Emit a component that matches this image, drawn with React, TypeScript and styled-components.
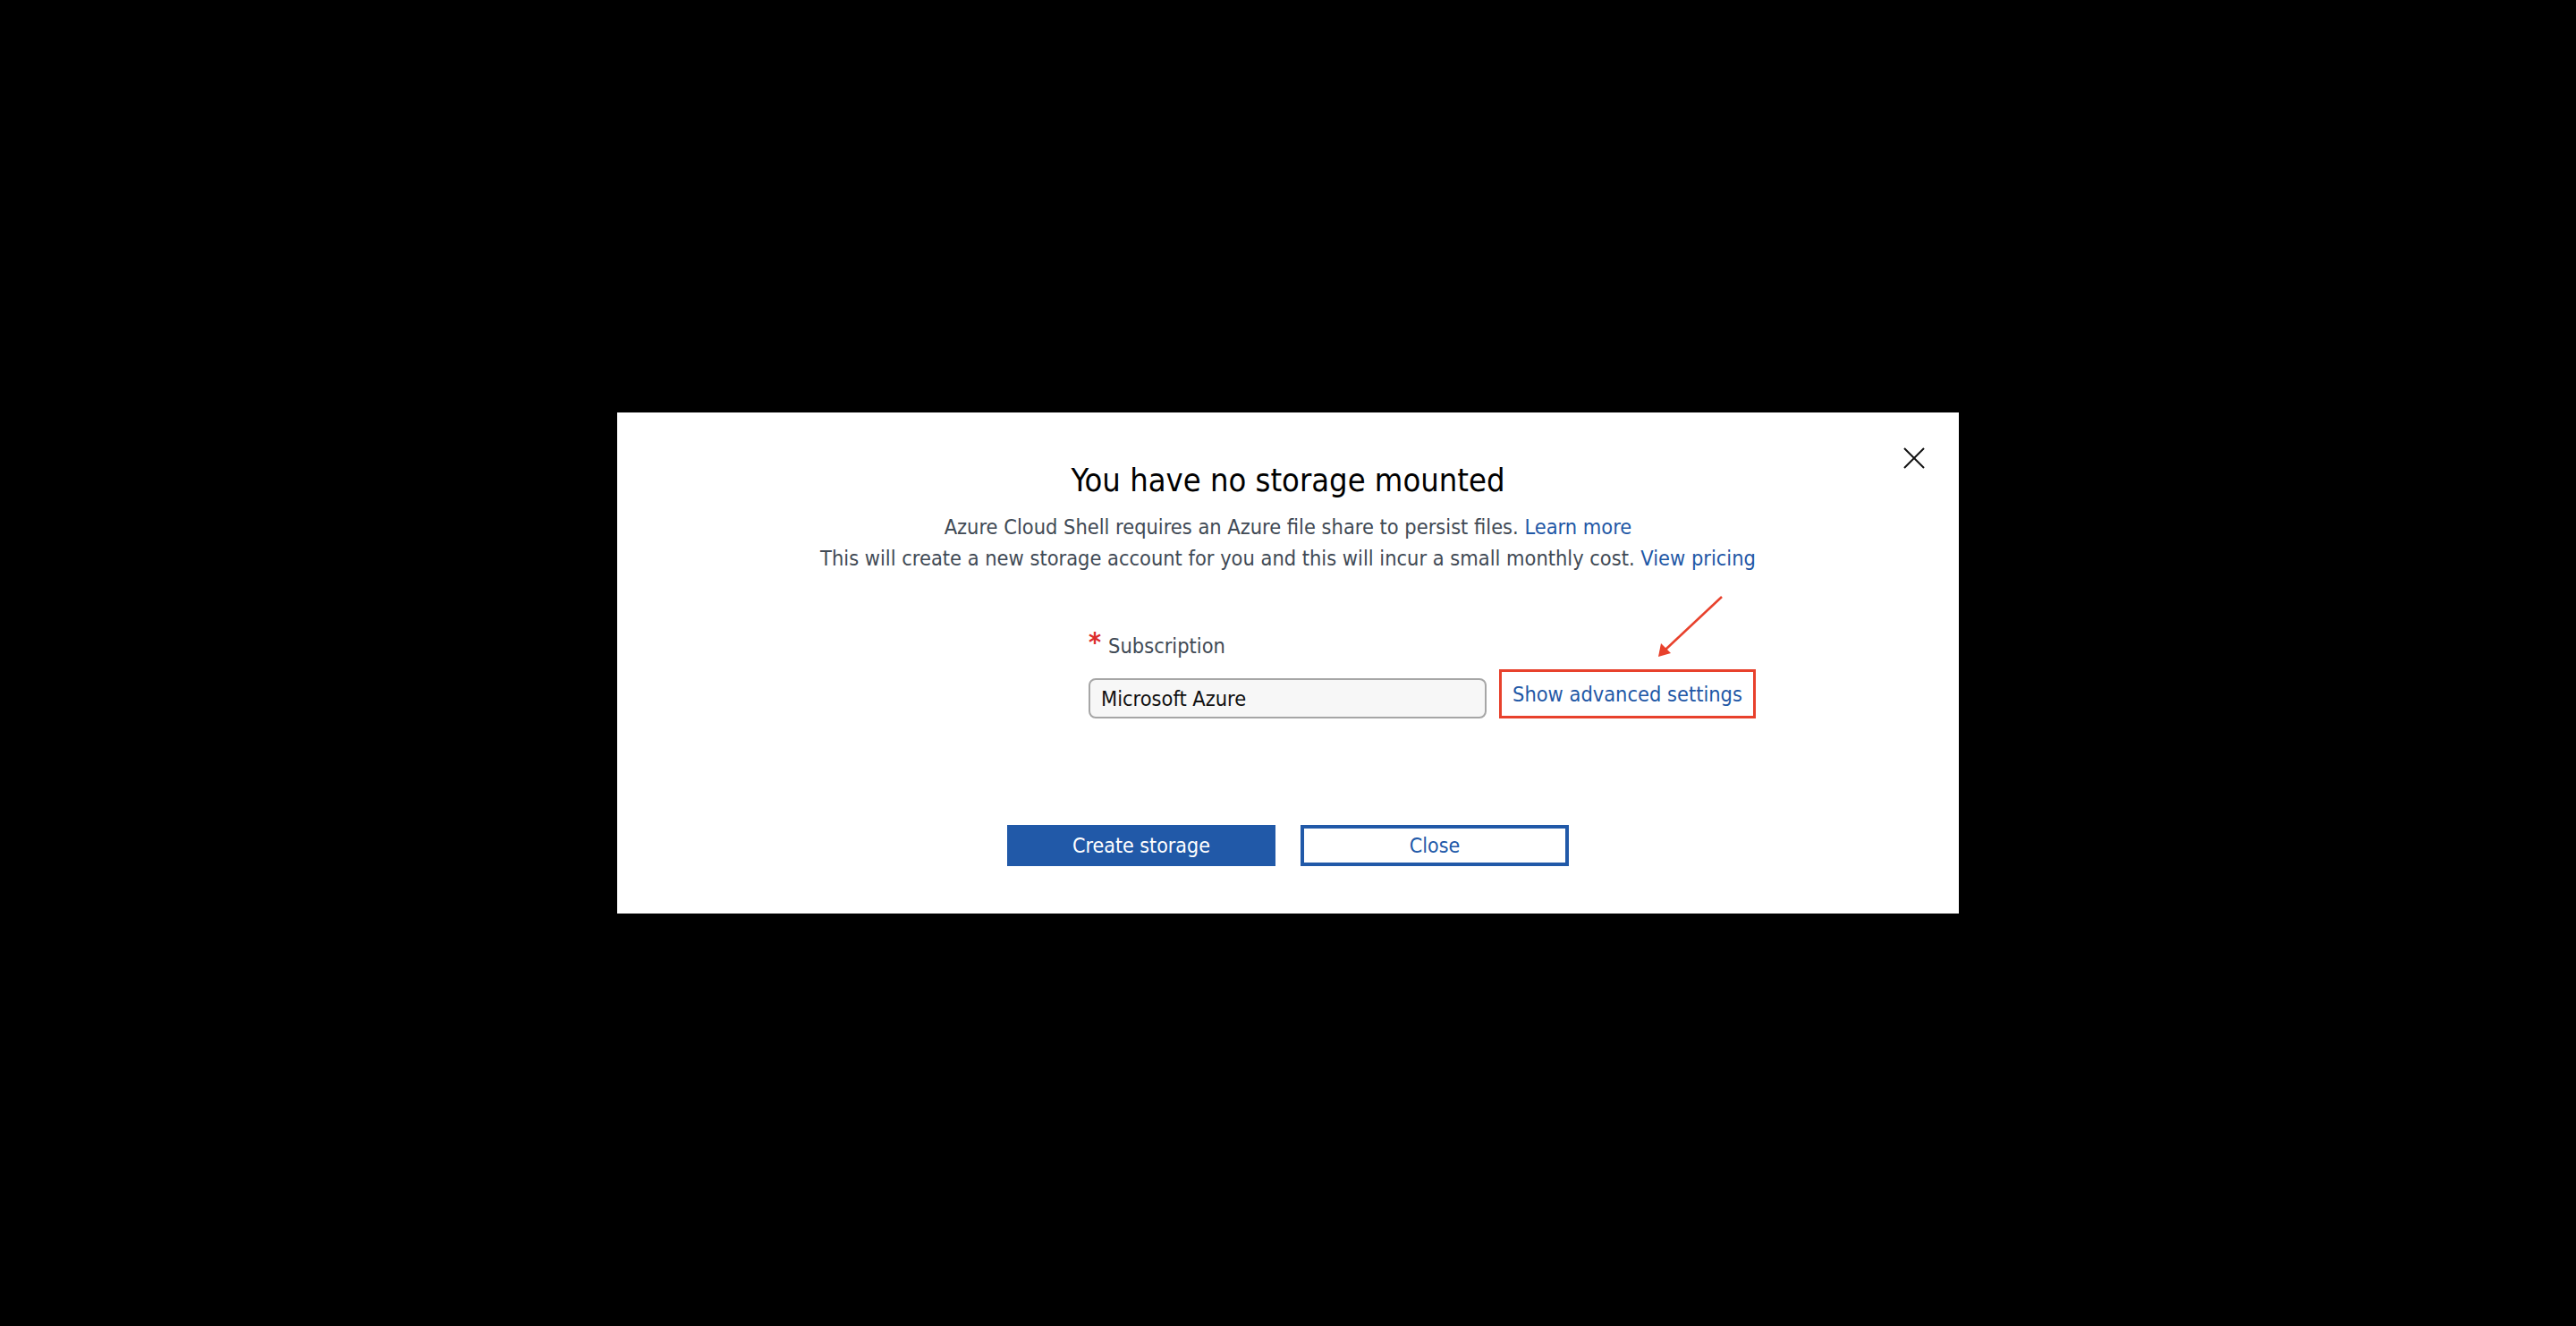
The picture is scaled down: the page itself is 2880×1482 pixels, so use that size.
import React from "react";
import styled, { createGlobalStyle } from "styled-components";

const Global = createGlobalStyle`
  html, body { margin: 0; padding: 0; background: #000; }
  body { font-family: "DejaVu Sans Condensed", "Open Sans", sans-serif; }
`;

const Screen = styled.div`
  width: 2880px;
  height: 1482px;
  background: #000;
  display: flex;
  align-items: center;
  justify-content: center;
`;

const Dialog = styled.div`
  position: relative;
  width: 1500px;
  height: 560px;
  background: #fff;
  box-sizing: border-box;
  display: flex;
  flex-direction: column;
  align-items: center;
  padding: 54px 0 53px;
`;

const CloseIcon = styled.button`
  position: absolute;
  top: 39px;
  right: 38px;
  width: 24px;
  height: 24px;
  padding: 0;
  border: 0;
  background: transparent;
  display: flex;
`;

const Title = styled.h1`
  margin: 0;
  font-size: 36px;
  line-height: 44px;
  font-weight: 400;
  color: #000;
`;

const Intro = styled.p`
  margin: 13px 0 0;
  font-size: 23.4px;
  line-height: 35px;
  color: #414a55;
  text-align: center;
`;

const Link = styled.a`
  color: #1f58a6;
  text-decoration: none;
`;

const Form = styled.div`
  align-self: stretch;
  padding-left: 527px;
  margin-top: 66px;
  display: flex;
  flex-direction: column;
  gap: 12px;
`;

const Label = styled.div`
  display: flex;
  align-items: center;
  gap: 8px;
  font-size: 23.4px;
  line-height: 28px;
  color: #414a55;
`;

const Star = styled.span`
  color: #dc2c2c;
  font-size: 30px;
  font-weight: 700;
  line-height: 24px;
  height: 24px;
  align-self: flex-start;
  margin-top: -2px;
`;

const FieldRow = styled.div`
  display: flex;
  align-items: flex-end;
  gap: 14px;
`;

const Select = styled.div`
  width: 445px;
  height: 45px;
  box-sizing: border-box;
  border: 2px solid #a6a6a6;
  border-radius: 8px;
  background: #f7f7f7;
  padding: 0 12px;
  display: flex;
  align-items: center;
  font-size: 23.4px;
  color: #111;
`;

const Highlight = styled.div`
  width: 287px;
  height: 55px;
  box-sizing: border-box;
  border: 3px solid #e8412c;
  display: flex;
  align-items: center;
  justify-content: center;
  font-size: 23.4px;
`;

const Buttons = styled.div`
  margin-top: auto;
  display: flex;
  gap: 28px;
`;

const Button = styled.button<{ $primary?: boolean }>`
  width: 300px;
  height: 46px;
  box-sizing: border-box;
  font-family: inherit;
  font-size: 23px;
  border: ${(p) => (p.$primary ? "0" : "4px solid #2159a8")};
  background: ${(p) => (p.$primary ? "#2159a8" : "#fff")};
  color: ${(p) => (p.$primary ? "#fff" : "#2159a8")};
  padding: 0;
`;

const Arrow = styled.svg`
  position: absolute;
  left: 1150px;
  top: 195px;
  overflow: visible;
`;

export default function App() {
  return (
    <Screen>
      <Global />
      <Dialog>
        <CloseIcon aria-label="Close">
          <svg width="24" height="24" viewBox="0 0 24 24">
            <path d="M1 1 L23 23 M23 1 L1 23" stroke="#111" strokeWidth="2" />
          </svg>
        </CloseIcon>
        <Title>You have no storage mounted</Title>
        <Intro>
          Azure Cloud Shell requires an Azure file share to persist files. <Link>Learn more</Link>
          <br />
          This will create a new storage account for you and this will incur a small monthly cost.{" "}
          <Link>View pricing</Link>
        </Intro>
        <Form>
          <Label>
            <Star>*</Star>
            Subscription
          </Label>
          <FieldRow>
            <Select>Microsoft Azure</Select>
            <Highlight>
              <Link>Show advanced settings</Link>
            </Highlight>
          </FieldRow>
        </Form>
        <Buttons>
          <Button $primary>Create storage</Button>
          <Button>Close</Button>
        </Buttons>
        <Arrow width="100" height="100" viewBox="1150 195 100 100">
          <line x1="1235" y1="206" x2="1172" y2="265" stroke="#e8412c" strokeWidth="2.5" />
          <polygon points="1164,273 1167,258 1178,269" fill="#e8412c" />
        </Arrow>
      </Dialog>
    </Screen>
  );
}
